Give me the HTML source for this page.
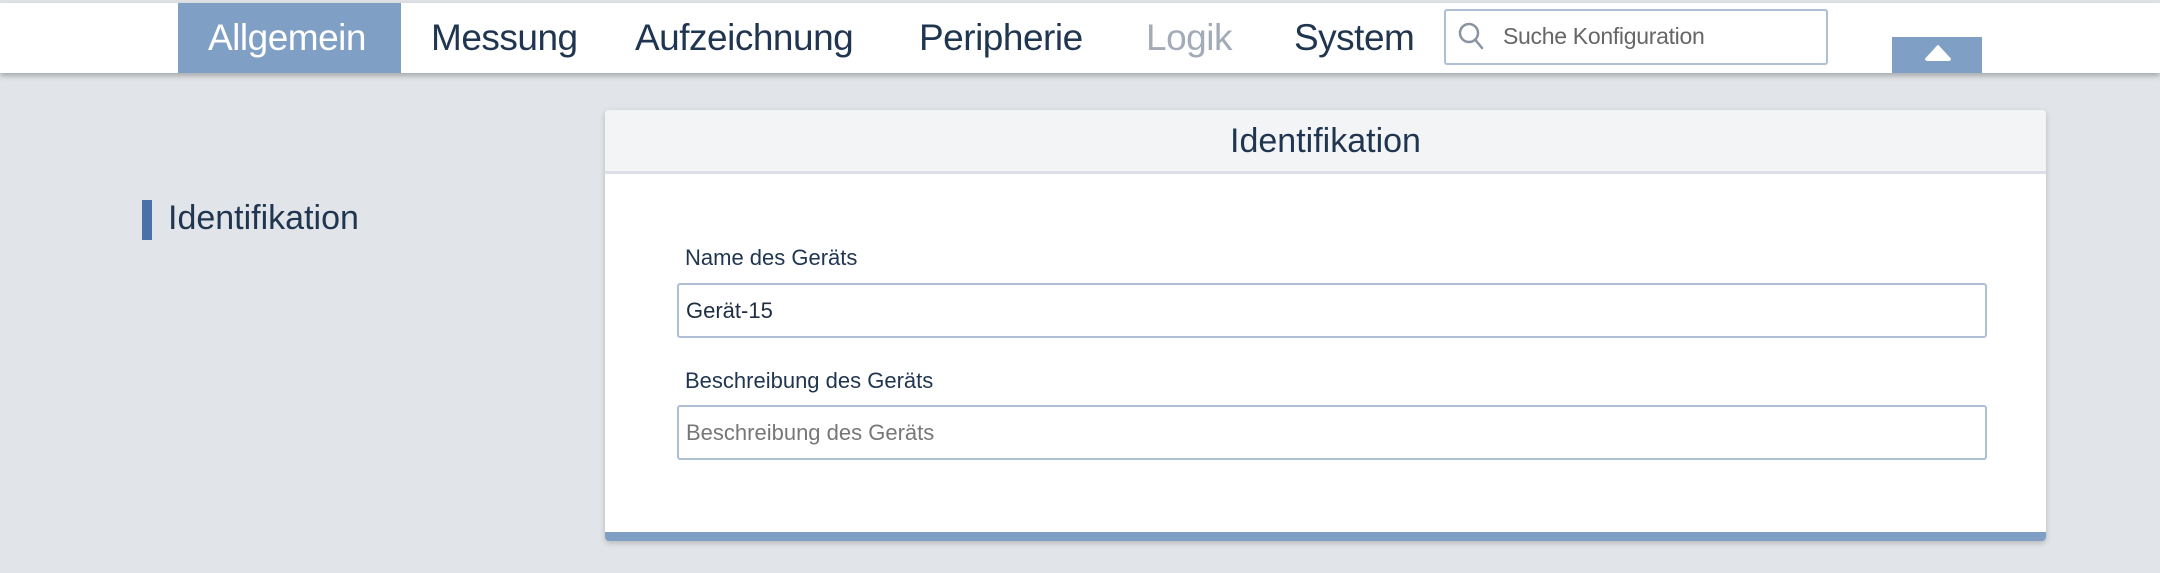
<!DOCTYPE html>
<html><head><meta charset="utf-8"><style>
*{margin:0;padding:0;box-sizing:border-box}
body{width:2160px;height:573px;background:#e1e4e8;font-family:"Liberation Sans",sans-serif;position:relative;overflow:hidden}
.a{position:absolute;white-space:nowrap}
#top{position:absolute;left:0;top:0;width:2160px;height:3px;background:#dfe2e6}
#nav{position:absolute;left:0;top:3px;width:2160px;height:70px;background:#fff;box-shadow:0 3px 5px rgba(0,0,0,.25)}
.t{font-size:37px;color:#1f3550;top:17px;letter-spacing:-0.5px}
</style></head><body>
<div id="top"></div>
<div id="nav"></div>
<div class="a" style="left:178px;top:3px;width:223px;height:70px;background:#7f9fc4"></div>
<div class="a t" style="left:208px;color:#fff">Allgemein</div>
<div class="a t" style="left:431px">Messung</div>
<div class="a t" style="left:635px">Aufzeichnung</div>
<div class="a t" style="left:919px">Peripherie</div>
<div class="a t" style="left:1146px;color:#a3abb8">Logik</div>
<div class="a t" style="left:1294px">System</div>
<div class="a" style="left:1444px;top:9px;width:384px;height:56px;border:2px solid #aebfd6;border-radius:3px;background:#fff"></div>
<svg class="a" style="left:1457px;top:20px" width="30" height="32" viewBox="0 0 30 32"><circle cx="12" cy="13" r="9" fill="none" stroke="#8a93a0" stroke-width="2.5"/><line x1="18.5" y1="20" x2="25" y2="28" stroke="#8a93a0" stroke-width="2.5" stroke-linecap="round"/></svg>
<div class="a" style="left:1503px;top:23px;font-size:23px;color:#666;letter-spacing:-0.3px">Suche Konfiguration</div>
<div class="a" style="left:1892px;top:37px;width:90px;height:36px;background:#7f9fc4"></div>
<svg class="a" style="left:1924px;top:44px" width="28" height="18" viewBox="0 0 28 18"><path d="M14 2 L26 15 Q26 16 24 16 L4 16 Q2 16 2 15 Z" fill="#fff" stroke="#fff" stroke-linejoin="round" stroke-width="2"/></svg>
<div class="a" style="left:142px;top:200px;width:10px;height:40px;background:#4a72a8"></div>
<div class="a" style="left:168px;top:199px;font-size:34px;color:#1f3550">Identifikation</div>
<div class="a" style="left:605px;top:110px;width:1441px;height:431px;background:#fff;border-radius:4px;box-shadow:0 2px 6px rgba(0,0,0,.2);overflow:hidden">
 <div style="height:64px;background:#f3f4f6;border-bottom:3px solid #dcdfe3;text-align:center;font-size:34px;color:#1f3550;padding-top:12px">Identifikation</div>
 <div class="a" style="left:0;bottom:0;width:100%;height:9px;background:#7f9fc4"></div>
</div>
<div class="a" style="left:685px;top:245px;font-size:22px;color:#1f3550">Name des Geräts</div>
<div class="a" style="left:677px;top:283px;width:1310px;height:55px;border:2px solid #aebfd6;border-radius:3px;background:#fff"></div>
<div class="a" style="left:686px;top:298px;font-size:22px;color:#1f2d42">Gerät-15</div>
<div class="a" style="left:685px;top:368px;font-size:22px;color:#1f3550">Beschreibung des Geräts</div>
<div class="a" style="left:677px;top:405px;width:1310px;height:55px;border:2px solid #aebfd6;border-radius:3px;background:#fff"></div>
<div class="a" style="left:686px;top:420px;font-size:22px;color:#777">Beschreibung des Geräts</div>
</body></html>
